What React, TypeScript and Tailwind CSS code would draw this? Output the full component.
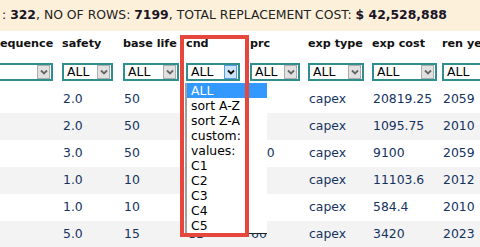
import React from "react";

const font = { fontFamily: '"DejaVu Sans", Verdana, sans-serif' };

const columns = [
  { name: "consequence", sel: 82 },
  { name: "safety", sel: 51 },
  { name: "base life", sel: 56 },
  { name: "cnd", sel: 54, focused: true },
  { name: "prc", sel: 50 },
  { name: "exp type", sel: 56 },
  { name: "exp cost", sel: 65 },
  { name: "ren year", sel: 70 },
];

const rows = [
  ["3.0", "2.0", "50", "C3", "", "capex", "20819.25", "2059"],
  ["3.0", "2.0", "50", "C2", "", "capex", "1095.75", "2010"],
  ["4.0", "3.0", "50", "C3", "100", "capex", "9100", "2059"],
  ["2.0", "1.0", "10", "C4", "", "capex", "11103.6", "2012"],
  ["2.0", "1.0", "10", "C2", "", "capex", "584.4", "2010"],
  ["5.0", "5.0", "15", "C1", "60", "capex", "3420", "2023"],
];

const options = ["ALL", "sort A-Z", "sort Z-A", "custom:", "values:", "C1", "C2", "C3", "C4", "C5"];

const Chevron = ({ dark }: { dark?: boolean }) => (
  <svg width="8" height="6" viewBox="0 0 8 6">
    <path d="M1 1.5 L4 4.5 L7 1.5" fill="none" stroke={dark ? "#111" : "#666"} strokeWidth="1.8" />
  </svg>
);

const FilterSelect = ({ width, focused }: { width: number; focused?: boolean }) => (
  <div
    className="h-[18px] border-2 border-[#2f8f8f] bg-white flex items-center justify-between pl-[3px] pr-[1px]"
    style={{ width }}
  >
    <span className="text-[12.4px] text-black leading-none">ALL</span>
    <div
      className={
        focused
          ? "h-[14px] w-[13px] bg-[#cce4f7] border border-[#569de5] flex items-center justify-center"
          : "h-[14px] w-[13px] bg-[#e1e1e1] border border-[#adadad] flex items-center justify-center"
      }
    >
      <Chevron dark={focused} />
    </div>
  </div>
);

const App = () => {
  return (
    <div className="relative w-[480px] h-[247px] overflow-hidden bg-white" style={font}>
      <div className="h-[31px] bg-[#fdf0da] flex items-center pl-[2px] text-[12.4px] text-[#222] whitespace-pre">
        {": "}
        <b className="text-[#1a1426]">322</b>
        {", NO OF ROWS: "}
        <b className="text-[#1a1426]">7199</b>
        {", TOTAL REPLACEMENT COST: "}
        <b className="text-[#1a1426]">$ 42,528,888</b>
      </div>

      <div className="ml-[-29px] grid grid-cols-[91px_61px_63px_64px_58px_64px_70px_80px] text-[12px] whitespace-nowrap">
        {columns.map((c) => (
          <div key={c.name} className="h-[27px] flex items-center font-bold text-[11.2px] text-[#111]">
            {c.name}
          </div>
        ))}
        {columns.map((c) => (
          <div key={c.name + "-f"} className="h-[28px] flex items-center">
            <FilterSelect width={c.sel} focused={c.focused} />
          </div>
        ))}
        {rows.map((r, i) =>
          r.map((v, j) => (
            <div
              key={i + "-" + j}
              className={
                i % 2 === 1
                  ? "h-[27px] flex items-center pl-[1px] bg-[#f3f3f3] text-[#15335f] text-[12.4px]"
                  : "h-[27px] flex items-center pl-[1px] bg-white text-[#15335f] text-[12.4px]"
              }
            >
              {v}
            </div>
          ))
        )}
      </div>

      <div className="absolute left-[185px] top-[83px] w-[82px] h-[151px] bg-white border-l-2 border-l-[#a0a0a0] border-b border-b-[#222] text-[12.4px] text-black">
        {options.map((o, i) => (
          <div
            key={o}
            className={
              i === 0
                ? "h-[15px] leading-[15px] pl-[4px] bg-[#3399ff] text-white"
                : "h-[15px] leading-[15px] pl-[4px]"
            }
          >
            {o}
          </div>
        ))}
      </div>

      <div className="absolute left-[180px] top-[35px] w-[69px] h-[202px] border-4 border-[#e5473d]" />
    </div>
  );
};

export default App;
